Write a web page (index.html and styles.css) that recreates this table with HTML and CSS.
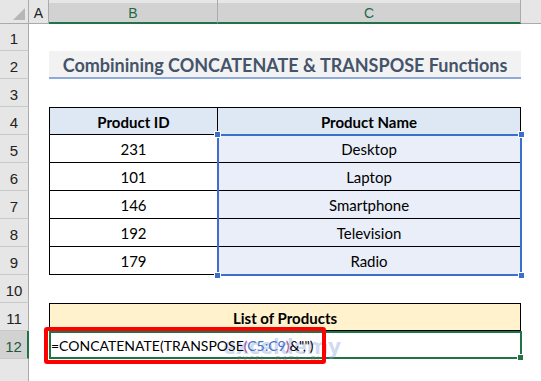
FILE: index.html
```html
<!DOCTYPE html>
<html>
<head>
<meta charset="utf-8">
<link rel="stylesheet" href="styles.css">
</head>
<body>
<div class="sheet">
  <div class="corner"><svg width="29" height="24" viewBox="0 0 29 24"><polygon points="25,8 25,20 13,20" fill="#b7b7b7"/></svg></div>
  <div class="colhdr hdr-a">A</div>
  <div class="colhdr sel hdr-b">B</div>
  <div class="colhdr sel hdr-c">C</div>
  <div class="colhdr hdr-rest"></div>

  <div class="rowhdr r1">1</div>
  <div class="rowhdr r2">2</div>
  <div class="rowhdr r3">3</div>
  <div class="rowhdr r4">4</div>
  <div class="rowhdr r5">5</div>
  <div class="rowhdr r6">6</div>
  <div class="rowhdr r7">7</div>
  <div class="rowhdr r8">8</div>
  <div class="rowhdr r9">9</div>
  <div class="rowhdr r10">10</div>
  <div class="rowhdr r11">11</div>
  <div class="rowhdr r12 active">12</div>
  <div class="rowhdr r13"></div>

  <div class="title r2 bc">Combinining CONCATENATE &amp; TRANSPOSE Functions</div>

  <div class="cell head top left r4 cb">Product ID</div>
  <div class="cell head top r4 cc">Product Name</div>

  <div class="cell left r5 cb">231</div>
  <div class="cell tint r5 cc">Desktop</div>
  <div class="cell left r6 cb">101</div>
  <div class="cell tint r6 cc">Laptop</div>
  <div class="cell left r7 cb">146</div>
  <div class="cell tint r7 cc">Smartphone</div>
  <div class="cell left r8 cb">192</div>
  <div class="cell tint r8 cc">Television</div>
  <div class="cell left r9 cb">179</div>
  <div class="cell tint r9 cc">Radio</div>

  <div class="range">
    <span class="h h-tl"></span><span class="h h-tr"></span>
    <span class="h h-bl"></span><span class="h h-br"></span>
  </div>

  <div class="cell list top left r11 bc">List of Products</div>
  <div class="editcell r12 bc">
    <span class="wm">exceldemy<span class="wm-sub">EXCEL · DATA · BI</span></span>
    <span class="formula">=CONCATENATE(TRANSPOSE<span class="par">(</span><span class="ref">C5:C9</span><span class="par">)</span>&amp;",")</span>
    <span class="gh"></span>
  </div>
  <div class="redbox"></div>
</div>
</body>
</html>
```
FILE: styles.css
```css
html, body {
  margin: 0;
  padding: 0;
  background: #ffffff;
}
.sheet {
  position: relative;
  width: 541px;
  height: 381px;
  overflow: hidden;
  display: grid;
  grid-template-columns: 29px 20px 169px 303px 20px;
  grid-template-rows: 24px 27px 28px 28px 28px 28px 28px 28px 28px 28px 28px 28px 28px 22px;
  font-family: Lato, "Liberation Sans", sans-serif;
  font-size: 15px;
  color: #000;
}
.corner {
  grid-row: 1;
  grid-column: 1;
  background: #e6e6e6;
  border-right: 1px solid #ababab;
  border-bottom: 1px solid #ababab;
  box-sizing: border-box;
}
.corner svg { display: block; }
.colhdr {
  grid-row: 1;
  box-sizing: border-box;
  background: #e6e6e6;
  border-right: 1px solid #ababab;
  border-bottom: 1px solid #ababab;
  display: flex;
  align-items: center;
  justify-content: center;
  padding-top: 3px;
  font-family: "Liberation Sans", sans-serif;
  font-size: 14px;
  color: #222;
}
.colhdr.sel {
  background: linear-gradient(#e6e6e6 0 3px, #d2d2d2 3px);
  border-bottom: 2px solid #217346;
  color: #1d6a47;
}
.hdr-a { grid-column: 2; }
.hdr-b { grid-column: 3; }
.hdr-c { grid-column: 4; }
.hdr-rest { grid-column: 5; border-right: none; }

.rowhdr {
  grid-column: 1;
  box-sizing: border-box;
  background: #e6e6e6;
  border-right: 1px solid #ababab;
  border-bottom: 1px solid #c8c8c8;
  display: flex;
  align-items: center;
  justify-content: center;
  padding-top: 3px;
  font-family: "Liberation Sans", sans-serif;
  font-size: 15px;
  color: #222;
}
.rowhdr.active {
  background: #d2d2d2;
  border-right: 2px solid #217346;
  color: #1d5a3c;
}
.rowhdr.r13 { border-bottom: none; }

.r1 { grid-row: 2; }
.r2 { grid-row: 3; }
.r3 { grid-row: 4; }
.r4 { grid-row: 5; }
.r5 { grid-row: 6; }
.r6 { grid-row: 7; }
.r7 { grid-row: 8; }
.r8 { grid-row: 9; }
.r9 { grid-row: 10; }
.r10 { grid-row: 11; }
.r11 { grid-row: 12; }
.r12 { grid-row: 13; }
.r13 { grid-row: 14; }

.cb { grid-column: 3; }
.cc { grid-column: 4; }
.bc { grid-column: 3 / 5; }

.title {
  background: #f2f2f2;
  border-bottom: 2px solid #8eaadb;
  box-sizing: border-box;
  display: flex;
  align-items: center;
  justify-content: center;
  font-weight: bold;
  font-size: 18px;
  color: #44546a;
  padding-top: 1px;
}

.cell {
  box-sizing: border-box;
  border-right: 1px solid #000;
  border-bottom: 1px solid #000;
  display: flex;
  align-items: center;
  justify-content: center;
  padding-top: 1px;
}
.cell.top { border-top: 1px solid #000; }
.cell.left { border-left: 1px solid #000; }
.cell.head {
  background: #dde8f4;
  font-weight: bold;
}
.cell.tint { background: #e9eef8; }
.cell.list {
  background: #fff2cc;
  font-weight: bold;
}

.range {
  grid-row: 6 / 11;
  grid-column: 4;
  margin: -1px -1px -1px -1px;
  border: 2px solid #3a6fcb;
  position: relative;
  z-index: 2;
}
.h {
  position: absolute;
  width: 5px;
  height: 5px;
  background: #3a6fcb;
  border: 1px solid #fff;
}
.h-tl { left: -5px; top: -5px; }
.h-tr { right: -5px; top: -5px; }
.h-bl { left: -5px; bottom: -5px; }
.h-br { right: -5px; bottom: -5px; }

.editcell {
  position: relative;
  margin-right: -1px;
  border: 2px solid #217346;
  display: flex;
  align-items: center;
  padding-left: 0;
  padding-top: 1px;
}
.formula {
  position: relative;
  font-size: 14px;
  white-space: nowrap;
  z-index: 1;
}
.ref { color: #4472c4; }
.par { color: #b04a9a; }
.gh {
  position: absolute;
  right: -4px;
  bottom: -4px;
  width: 5px;
  height: 5px;
  background: #217346;
  border: 1px solid #fff;
}
.wm {
  position: absolute;
  left: 172px;
  top: 1px;
  font-family: "Open Sans", sans-serif;
  font-weight: bold;
  font-size: 22px;
  line-height: 22px;
  color: rgba(130, 158, 218, 0.4);
}
.wm-sub {
  position: absolute;
  left: 14px;
  top: 21px;
  font-size: 8px;
  line-height: 8px;
  letter-spacing: 1px;
  color: rgba(120, 120, 130, 0.4);
  white-space: nowrap;
}
.redbox {
  position: absolute;
  left: 44px;
  top: 327px;
  width: 282px;
  height: 37px;
  box-sizing: border-box;
  border: 4px solid #ff0000;
  border-radius: 3px;
  z-index: 3;
}
```
